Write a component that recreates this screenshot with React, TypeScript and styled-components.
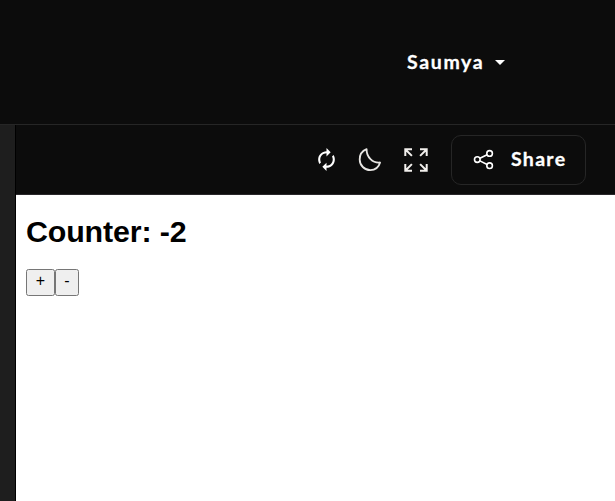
import React, { useState } from "react";
import styled, { createGlobalStyle } from "styled-components";

const GlobalStyle = createGlobalStyle`
  *, *::before, *::after { box-sizing: border-box; }
  body { margin: 0; background: #0c0c0c; overflow: hidden; }
`;

const Page = styled.div`
  display: flex;
  flex-direction: column;
  width: 615px;
  height: 501px;
  background: #0c0c0c;
  color: #fff;
  font-family: Lato, "Open Sans", sans-serif;
`;

const Header = styled.header`
  display: flex;
  align-items: center;
  justify-content: flex-end;
  height: 125px;
  padding-right: 110px;
  border-bottom: 1px solid #262626;
`;

const UserMenu = styled.div`
  display: flex;
  align-items: center;
  gap: 10px;
`;

const Label = styled.span<{ $width: number; $spacing: number }>`
  width: ${(p) => p.$width}px;
  padding-bottom: 1px;
  font-size: 19.5px;
  font-weight: 700;
  line-height: 24px;
  letter-spacing: ${(p) => p.$spacing}px;
  white-space: nowrap;
  -webkit-text-stroke: 0.3px currentColor;
`;

const Icon = styled.svg`
  display: block;
  flex: none;
`;

const Workspace = styled.div`
  display: flex;
  flex: 1;
  min-height: 0;
`;

const Gutter = styled.div`
  width: 16px;
  flex: none;
  background: #1e1e1e;
  border-right: 1px solid #000;
`;

const Panel = styled.main`
  display: flex;
  flex: 1;
  flex-direction: column;
`;

const Toolbar = styled.div`
  display: flex;
  align-items: center;
  justify-content: flex-end;
  height: 70px;
  padding-right: 29px;
  border-bottom: 1px solid #29272a;
`;

const Tools = styled.div`
  display: grid;
  grid-template-columns: 25px 44px 46px;
  align-items: center;
  justify-items: end;
  margin-right: 22px;
`;

const ShareButton = styled.button`
  display: flex;
  align-items: center;
  gap: 16px;
  width: 135px;
  height: 50px;
  padding: 0 0 0 20px;
  color: inherit;
  font-family: inherit;
  text-align: left;
  background: transparent;
  border: 1px solid #262626;
  border-radius: 10px;
`;

const Preview = styled.section`
  flex: 1;
  padding: 19px 10px;
  color: #000;
  background: #fff;
  font-family: "Liberation Sans", Arial, sans-serif;
`;

const Title = styled.h1`
  margin: 0 0 21px;
  font-size: 30.4px;
  font-weight: 700;
  line-height: 34px;
  letter-spacing: -0.15px;
`;

const Buttons = styled.div`
  display: flex;
`;

const CounterButton = styled.button<{ $width: number }>`
  width: ${(p) => p.$width}px;
  height: 27px;
  padding: 0 0 3px;
  color: #000;
  font: 16px/20px "Liberation Sans", Arial, sans-serif;
  background: #efefef;
  border: 1px solid #767676;
  border-radius: 2.5px;
`;

const RefreshIcon = () => (
  <Icon width="25" height="25" viewBox="0 0 24 24" fill="#fff">
    <path d="M12 6v3l4-4-4-4v3c-4.42 0-8 3.58-8 8 0 1.57.46 3.03 1.24 4.26L6.7 14.8A5.87 5.87 0 0 1 6 12c0-3.31 2.69-6 6-6zm6.76 1.74L17.3 9.2c.44.84.7 1.79.7 2.8 0 3.31-2.69 6-6 6v-3l-4 4 4 4v-3c4.42 0 8-3.58 8-8 0-1.57-.46-3.03-1.24-4.26z" />
  </Icon>
);

const MoonIcon = () => (
  <Icon width="26" height="26" viewBox="0 0 26 26" fill="none" stroke="#e8e6e3" strokeWidth="1.8" strokeLinejoin="round">
    <path d="M9.6 2.2C5.4 3.9 2.7 7.8 2.7 12.4c0 6 4.8 10.7 10.6 10.7 4.5 0 8.4-2.8 9.8-7.6-7.4.8-13.7-5.5-13.5-13.3z" />
  </Icon>
);

const ExpandIcon = () => (
  <Icon width="26" height="26" viewBox="0 0 26 26" fill="none" stroke="#f2f0ed" strokeWidth="2">
    <path d="M2.3 9V2.3H9M2.5 2.5l6.4 6.4M17 2.3h6.7V9M23.5 2.5l-6.4 6.4M2.3 17v6.7H9M2.5 23.5l6.4-6.4M23.7 17v6.7H17M23.5 23.5l-6.4-6.4" />
  </Icon>
);

const ShareIcon = () => (
  <Icon width="23" height="24" viewBox="0 0 23 24" fill="none" stroke="#fff" strokeWidth="1.6">
    <circle cx="5.3" cy="11.6" r="2.8" />
    <circle cx="17.6" cy="5.4" r="2.8" />
    <circle cx="17.6" cy="17.7" r="2.8" />
    <path d="M7.9 10.3l7.2-3.6M7.9 12.9l7.2 3.6" />
  </Icon>
);

export default function App() {
  const [count, setCount] = useState(-2);
  return (
    <Page>
      <GlobalStyle />
      <Header>
        <UserMenu>
          <Label $width={78} $spacing={1.65}>Saumya</Label>
          <Icon width="10" height="5" viewBox="0 0 10 5" fill="#fff">
            <path d="M0 0h10L5 5z" />
          </Icon>
        </UserMenu>
      </Header>
      <Workspace>
        <Gutter />
        <Panel>
          <Toolbar>
            <Tools>
              <RefreshIcon />
              <MoonIcon />
              <ExpandIcon />
            </Tools>
            <ShareButton>
              <ShareIcon />
              <Label $width={56} $spacing={1.3}>Share</Label>
            </ShareButton>
          </Toolbar>
          <Preview>
            <Title>Counter: {count}</Title>
            <Buttons>
              <CounterButton $width={29} onClick={() => setCount(count + 1)}>+</CounterButton>
              <CounterButton $width={24} onClick={() => setCount(count - 1)}>-</CounterButton>
            </Buttons>
          </Preview>
        </Panel>
      </Workspace>
    </Page>
  );
}
